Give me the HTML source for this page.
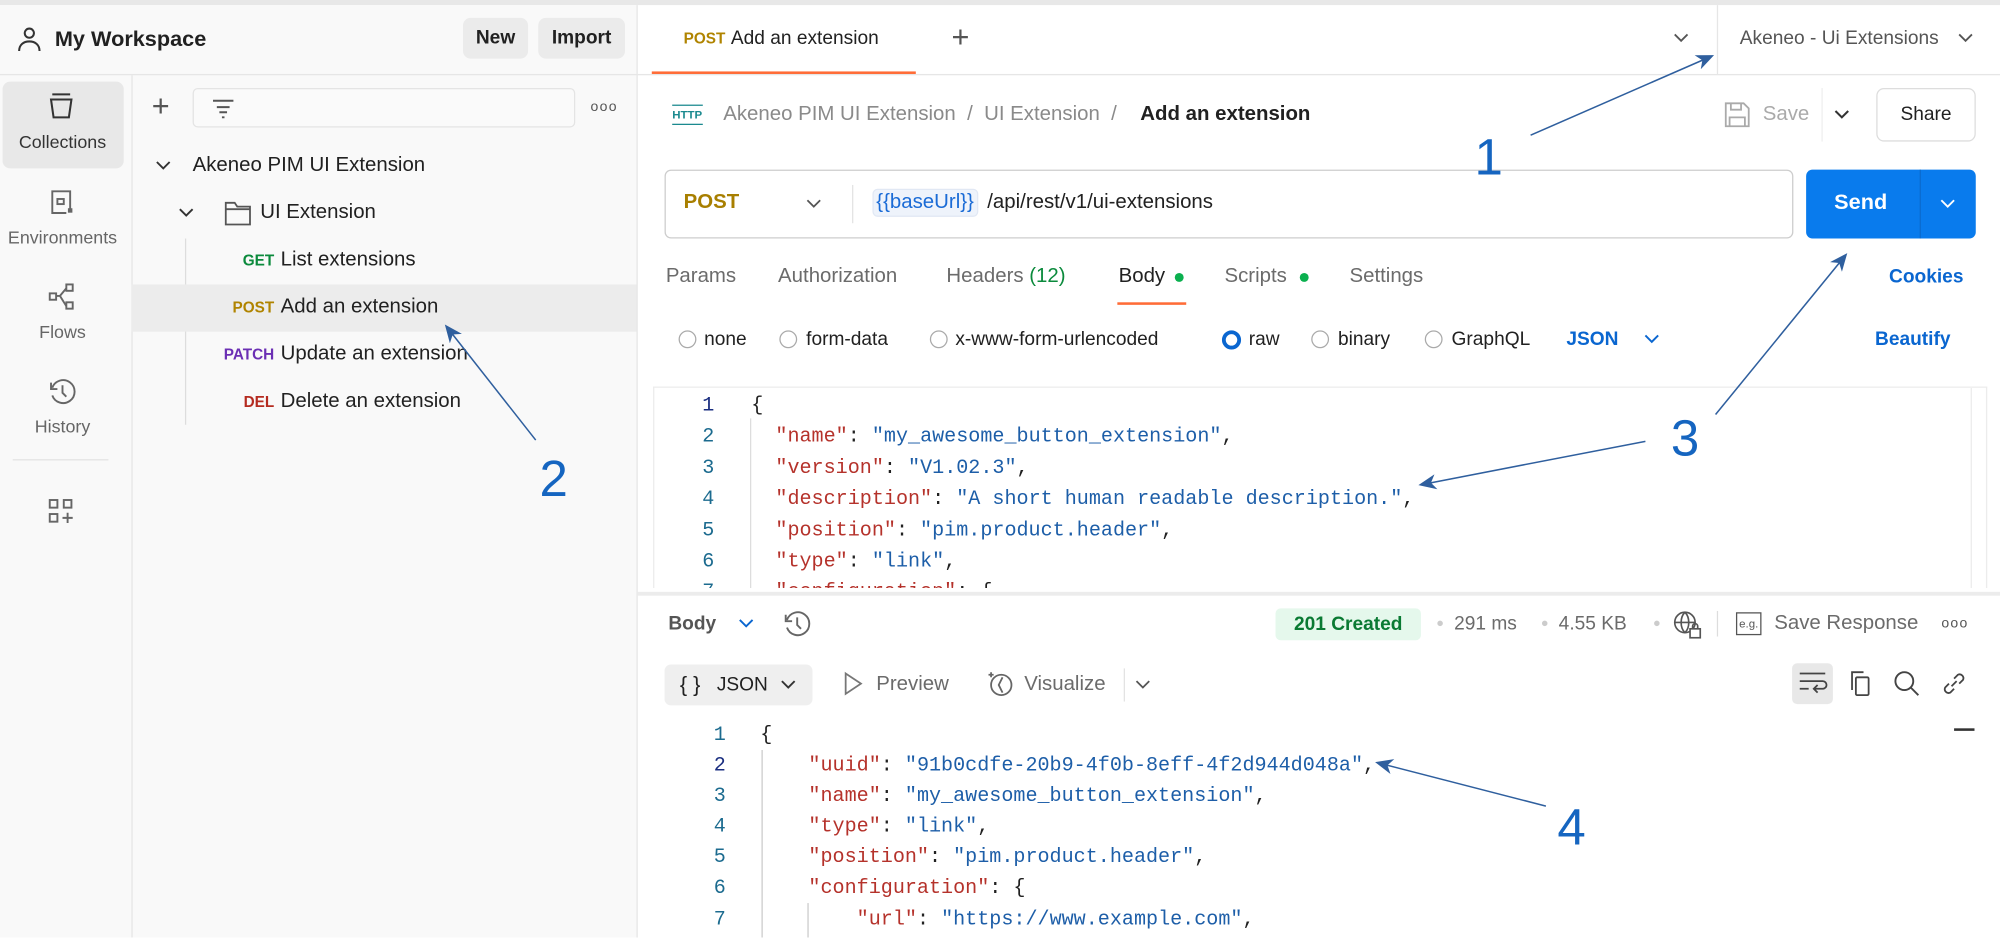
<!DOCTYPE html>
<html><head><meta charset="utf-8"><style>
*{box-sizing:border-box;margin:0;padding:0}
html,body{width:2000px;height:937px;overflow:hidden;background:#fff}
#w{position:absolute;left:0;top:0;width:1568px;height:735px;transform:scale(1.27551);transform-origin:0 0;font-family:"Liberation Sans",sans-serif;color:#212121;font-size:16px}
.a{position:absolute;white-space:nowrap}
.c{transform:translateY(-50%)}
.mono{font-family:"Liberation Mono",monospace;font-size:15.75px}
.k{color:#b5322b}.s{color:#1d5ea8}
.g{color:#6b6b6b}
svg{position:absolute;overflow:visible}
</style></head><body><div id="w">
<div class="a" style="left:0;top:0;width:1568px;height:4px;background:#e8e8e8"></div>
<!-- sidebar -->
<div class="a" style="left:0;top:4px;width:500px;height:731px;background:#f9f9f9;border-right:1px solid #e6e6e6"></div>
<div class="a" style="left:0;top:58px;width:500px;height:1px;background:#e6e6e6"></div>
<div class="a" style="left:103px;top:59px;width:1px;height:676px;background:#e6e6e6"></div>
<svg style="left:12px;top:20px" width="22" height="22" viewBox="0 0 22 22" fill="none" stroke="#333" stroke-width="1.6"><circle cx="11" cy="6" r="3.6"/><path d="M3 20c0-5 3.5-7.5 8-7.5s8 2.5 8 7.5"/></svg>
<div class="a c" style="left:43px;top:31px;font-weight:bold;font-size:17px">My Workspace</div>
<div class="a" style="left:363px;top:14px;width:51px;height:32px;background:#ebebeb;border-radius:6px;font-weight:bold;font-size:15px;line-height:32px;text-align:center">New</div>
<div class="a" style="left:422px;top:14px;width:68px;height:32px;background:#ebebeb;border-radius:6px;font-weight:bold;font-size:15px;line-height:32px;text-align:center">Import</div>
<div class="a" style="left:2px;top:64px;width:95px;height:68px;background:#e8e8e8;border-radius:6px"></div>
<svg style="left:38px;top:72px" width="20" height="22" viewBox="0 0 20 22" fill="none" stroke="#333" stroke-width="1.6"><path d="M3 2h14M2 6h16l-2 14H4z"/></svg>
<div class="a c" style="left:0;width:98px;text-align:center;top:111px;font-size:14px;color:#333">Collections</div>
<svg style="left:39px;top:148px" width="20" height="22" viewBox="0 0 20 22" fill="none" stroke="#666" stroke-width="1.5"><path d="M16 16V2H2v17h11"/><rect x="6" y="8" width="5" height="4"/><rect x="15" y="16" width="2" height="2" fill="#666"/></svg>
<div class="a c" style="left:0;width:98px;text-align:center;top:186px;font-size:14px;color:#666">Environments</div>
<svg style="left:38px;top:222px" width="22" height="22" viewBox="0 0 22 22" fill="none" stroke="#666" stroke-width="1.5"><rect x="1" y="8" width="5" height="5"/><rect x="14" y="1" width="5" height="5"/><rect x="14" y="15" width="5" height="5"/><path d="M6 10h3l5-6M9 10l5 8"/></svg>
<div class="a c" style="left:0;width:98px;text-align:center;top:260px;font-size:14px;color:#666">Flows</div>
<svg style="left:38px;top:296px" width="22" height="22" viewBox="0 0 22 22" fill="none" stroke="#666" stroke-width="1.5"><path d="M3 8a9 9 0 1 1 0 6M2 4v5h5M11 6v6l3 3"/></svg>
<div class="a c" style="left:0;width:98px;text-align:center;top:334px;font-size:14px;color:#666">History</div>
<div class="a" style="left:10px;top:360px;width:75px;height:1px;background:#e3e3e3"></div>
<svg style="left:38px;top:391px" width="20" height="20" viewBox="0 0 20 20" fill="none" stroke="#666" stroke-width="1.5"><rect x="1" y="1" width="6" height="6"/><rect x="12" y="1" width="6" height="6"/><rect x="1" y="12" width="6" height="6"/><path d="M15 11v8M11 15h8"/></svg>
<!-- tree -->
<div class="a c" style="left:119px;top:84px;font-size:24px;color:#555;font-weight:300">+</div>
<div class="a" style="left:151px;top:69px;width:300px;height:31px;border:1px solid #e4e4e4;border-radius:4px;background:#fafafa"></div>
<svg style="left:165px;top:76px" width="20" height="18" viewBox="0 0 20 18" stroke="#555" stroke-width="1.5"><path d="M2 3h16M5 8h10M7 12h6M9 16h2"/></svg>
<div class="a c" style="left:463px;top:84px;font-size:11px;color:#555;letter-spacing:1px">ooo</div>
<svg style="left:122px;top:124px" width="12" height="12" viewBox="0 0 12 12" fill="none" stroke="#333" stroke-width="1.5"><path d="M1 3l5 5 5-5"/></svg>
<div class="a c" style="left:151px;top:130px">Akeneo PIM UI Extension</div>
<svg style="left:140px;top:161px" width="12" height="12" viewBox="0 0 12 12" fill="none" stroke="#333" stroke-width="1.5"><path d="M1 3l5 5 5-5"/></svg>
<svg style="left:176px;top:156px" width="22" height="22" viewBox="0 0 22 22" fill="none" stroke="#555" stroke-width="1.4"><path d="M1 3h7l2 3h10v14H1zM1 8h19"/></svg>
<div class="a c" style="left:204px;top:167px">UI Extension</div>
<div class="a" style="left:145px;top:187px;width:1px;height:146px;background:#ddd"></div>
<div class="a" style="left:103px;top:223px;width:396px;height:37px;background:#ececec"></div>
<div class="a c" style="right:1353px;top:204px;font-size:12px;font-weight:bold;color:#0b8a3c">GET</div>
<div class="a c" style="left:220px;top:204px">List extensions</div>
<div class="a c" style="right:1353px;top:241px;font-size:12px;font-weight:bold;color:#b08400">POST</div>
<div class="a c" style="left:220px;top:241px">Add an extension</div>
<div class="a c" style="right:1353px;top:278px;font-size:12px;font-weight:bold;color:#6b2fb4">PATCH</div>
<div class="a c" style="left:220px;top:278px">Update an extension</div>
<div class="a c" style="right:1353px;top:315px;font-size:12px;font-weight:bold;color:#b52b20">DEL</div>
<div class="a c" style="left:220px;top:315px">Delete an extension</div>
<!-- tab bar -->
<div class="a" style="left:500px;top:58px;width:1068px;height:1px;background:#e6e6e6"></div>
<div class="a c" style="left:536px;top:30px;font-size:12px;font-weight:bold;color:#b08400">POST</div>
<div class="a c" style="left:573px;top:30px;font-size:15px">Add an extension</div>
<div class="a" style="left:511px;top:56px;width:207px;height:2px;background:#ff6c37"></div>
<div class="a c" style="left:746px;top:30px;font-size:24px;color:#555;font-weight:300">+</div>
<svg style="left:1312px;top:25px" width="12" height="10" viewBox="0 0 12 10" fill="none" stroke="#555" stroke-width="1.4"><path d="M1 2l5 5 5-5"/></svg>
<div class="a" style="left:1346px;top:4px;width:1px;height:54px;background:#e6e6e6"></div>
<div class="a c" style="left:1364px;top:30px;font-size:15px;color:#555">Akeneo - Ui Extensions</div>
<svg style="left:1535px;top:25px" width="12" height="10" viewBox="0 0 12 10" fill="none" stroke="#555" stroke-width="1.4"><path d="M1 2l5 5 5-5"/></svg>
<!-- breadcrumb -->
<div class="a c" style="left:527px;top:90px;font-size:9px;font-weight:bold;color:#1b8a8f;border-top:1.5px solid #1b8a8f;border-bottom:1.5px solid #1b8a8f;padding:2px 0">HTTP</div>
<div class="a c g" style="left:567px;top:90px;color:#8a8a8a">Akeneo PIM UI Extension &nbsp;/ &nbsp;UI Extension &nbsp;/&nbsp;</div>
<div class="a c" style="left:894px;top:90px;font-weight:bold;color:#212121">Add an extension</div>
<svg style="left:1352px;top:80px" width="20" height="20" viewBox="0 0 20 20" fill="none" stroke="#aaa" stroke-width="1.4"><path d="M1 1h14l4 4v14H1zM5 1v5h8V1M4 19v-7h12v7"/></svg>
<div class="a c" style="left:1382px;top:90px;color:#aaa">Save</div>
<div class="a" style="left:1428px;top:69px;width:1px;height:42px;background:#eee"></div>
<svg style="left:1438px;top:85px" width="12" height="10" viewBox="0 0 12 10" fill="none" stroke="#333" stroke-width="1.6"><path d="M1 2l5 5 5-5"/></svg>
<div class="a" style="left:1471px;top:69px;width:78px;height:42px;border:1px solid #ddd;border-radius:6px;line-height:40px;text-align:center;font-size:15px">Share</div>
<!-- url -->
<div class="a" style="left:521px;top:133px;width:885px;height:54px;border:1px solid #cdcdcd;border-radius:5px"></div>
<div class="a c" style="left:536px;top:159px;font-weight:bold;color:#a87f00">POST</div>
<svg style="left:632px;top:155px" width="12" height="10" viewBox="0 0 12 10" fill="none" stroke="#555" stroke-width="1.4"><path d="M1 2l5 5 5-5"/></svg>
<div class="a" style="left:668px;top:145px;width:1px;height:30px;background:#e3e3e3"></div>
<div class="a c" style="left:684px;top:159px;background:#eef3fb;border:1px solid #e1e8f4;border-radius:4px;color:#1a6bd6;padding:1px 2px">{{baseUrl}}</div>
<div class="a c" style="left:774px;top:159px">/api/rest/v1/ui-extensions</div>
<div class="a" style="left:1416px;top:133px;width:133px;height:54px;background:#097bed;border-radius:5px"></div>
<div class="a" style="left:1505px;top:133px;width:1px;height:54px;background:#0a6bcf"></div>
<div class="a c" style="left:1438px;top:159px;color:#fff;font-weight:bold;font-size:17px">Send</div>
<svg style="left:1521px;top:155px" width="12" height="10" viewBox="0 0 12 10" fill="none" stroke="#fff" stroke-width="1.5"><path d="M1 2l5 5 5-5"/></svg>
<!-- tabs -->
<div class="a c" style="left:522px;top:217px;color:#6b6b6b">Params</div>
<div class="a c" style="left:610px;top:217px;color:#6b6b6b">Authorization</div>
<div class="a c" style="left:742px;top:217px;color:#6b6b6b">Headers <span style="color:#0b8a3c">(12)</span></div>
<div class="a c" style="left:877px;top:217px">Body</div>
<div class="a" style="left:921px;top:214px;width:7px;height:7px;border-radius:50%;background:#0bb04f"></div>
<div class="a" style="left:876px;top:237px;width:54px;height:2px;background:#ff6c37"></div>
<div class="a c" style="left:960px;top:217px;color:#6b6b6b">Scripts</div>
<div class="a" style="left:1019px;top:214px;width:7px;height:7px;border-radius:50%;background:#0bb04f"></div>
<div class="a c" style="left:1058px;top:217px;color:#6b6b6b">Settings</div>
<div class="a c" style="left:1481px;top:217px;color:#0a66d0;font-weight:bold;font-size:15px">Cookies</div>
<!-- radios -->
<div class="a" style="left:532px;top:259px;width:14px;height:14px;border:1px solid #aaa;border-radius:50%"></div>
<div class="a c" style="left:552px;top:266px;font-size:15px">none</div>
<div class="a" style="left:611px;top:259px;width:14px;height:14px;border:1px solid #aaa;border-radius:50%"></div>
<div class="a c" style="left:632px;top:266px;font-size:15px">form-data</div>
<div class="a" style="left:729px;top:259px;width:14px;height:14px;border:1px solid #aaa;border-radius:50%"></div>
<div class="a c" style="left:749px;top:266px;font-size:15px">x-www-form-urlencoded</div>
<div class="a" style="left:958px;top:259px;width:15px;height:15px;border:3.5px solid #0a66d0;border-radius:50%"></div>
<div class="a c" style="left:979px;top:266px;font-size:15px">raw</div>
<div class="a" style="left:1028px;top:259px;width:14px;height:14px;border:1px solid #aaa;border-radius:50%"></div>
<div class="a c" style="left:1049px;top:266px;font-size:15px">binary</div>
<div class="a" style="left:1117px;top:259px;width:14px;height:14px;border:1px solid #aaa;border-radius:50%"></div>
<div class="a c" style="left:1138px;top:266px;font-size:15px">GraphQL</div>
<div class="a c" style="left:1228px;top:266px;font-size:15px;font-weight:bold;color:#0a66d0">JSON</div>
<svg style="left:1289px;top:261px" width="12" height="10" viewBox="0 0 12 10" fill="none" stroke="#0a66d0" stroke-width="1.5"><path d="M1 2l5 5 5-5"/></svg>
<div class="a c" style="left:1470px;top:266px;font-size:15px;font-weight:bold;color:#0a66d0">Beautify</div>
<!-- editor -->
<div class="a" style="left:512px;top:303px;width:1046px;height:158px;border:1px solid #ececec;border-bottom:none;overflow:hidden">
 <div class="a" style="left:1032px;top:0;width:1px;height:158px;background:#ececec"></div>
 <div class="a" style="left:75px;top:24px;width:1px;height:140px;background:#ddd"></div>
 <div class="mono" style="position:absolute;left:0;top:2px;line-height:24.4px">
  <div style="position:absolute;left:0;width:47px;text-align:right;color:#1c6b8f"><div style="color:#1a2e80">1</div><div>2</div><div>3</div><div>4</div><div>5</div><div>6</div><div>7</div></div>
  <div style="position:absolute;left:76px;white-space:pre">{
  <span class="k">"name"</span>: <span class="s">"my_awesome_button_extension"</span>,
  <span class="k">"version"</span>: <span class="s">"V1.02.3"</span>,
  <span class="k">"description"</span>: <span class="s">"A short human readable description."</span>,
  <span class="k">"position"</span>: <span class="s">"pim.product.header"</span>,
  <span class="k">"type"</span>: <span class="s">"link"</span>,
  <span class="k">"configuration"</span>: {</div>
 </div>
</div>
<div class="a" style="left:500px;top:464px;width:1068px;height:3px;background:#ececec"></div>
<!-- response bar -->
<div class="a c" style="left:524px;top:489px;font-size:15px;font-weight:bold;color:#555">Body</div>
<svg style="left:579px;top:484px" width="12" height="10" viewBox="0 0 12 10" fill="none" stroke="#0a66d0" stroke-width="1.5"><path d="M1 2l5 5 5-5"/></svg>
<svg style="left:614px;top:478px" width="22" height="22" viewBox="0 0 22 22" fill="none" stroke="#666" stroke-width="1.5"><path d="M3 8a9 9 0 1 1 0 6M2 4v5h5M11 6v6l3 3"/></svg>
<div class="a" style="left:1000px;top:477px;width:114px;height:25px;background:#e5f8ec;border-radius:4px;text-align:center;line-height:25px;color:#0a7a33;font-weight:bold;font-size:15px">201 Created</div>
<div class="a c" style="left:1126px;top:489px;color:#ccc;font-size:10px">●</div>
<div class="a c" style="left:1140px;top:489px;color:#6b6b6b;font-size:15px">291 ms</div>
<div class="a c" style="left:1208px;top:489px;color:#ccc;font-size:10px">●</div>
<div class="a c" style="left:1222px;top:489px;color:#6b6b6b;font-size:15px">4.55 KB</div>
<div class="a c" style="left:1296px;top:489px;color:#ccc;font-size:10px">●</div>
<svg style="left:1312px;top:479px" width="22" height="22" viewBox="0 0 22 22" fill="none" stroke="#555" stroke-width="1.3"><circle cx="9" cy="9" r="8"/><path d="M1 9h16M9 1c-4 4-4 12 0 16M9 1c4 4 4 12 0 16"/><rect x="13" y="14" width="8" height="7" fill="#fff"/><path d="M15 14v-2a2 2 0 0 1 4 0v2"/></svg>
<div class="a" style="left:1346px;top:479px;width:1px;height:20px;background:#ddd"></div>
<div class="a" style="left:1361px;top:480px;width:20px;height:18px;border:1.3px solid #555;font-size:9px;line-height:16px;text-align:center;color:#555">e.g.</div>
<div class="a c" style="left:1391px;top:489px;color:#6b6b6b;font-size:16px">Save Response</div>
<div class="a c" style="left:1522px;top:489px;font-size:11px;color:#555;letter-spacing:1px">ooo</div>
<div class="a" style="left:521px;top:521px;width:116px;height:32px;background:#efefef;border-radius:5px"></div>
<div class="a c" style="left:533px;top:537px;font-size:17px">{ }</div>
<div class="a c" style="left:562px;top:537px;font-size:15px">JSON</div>
<svg style="left:612px;top:532px" width="12" height="10" viewBox="0 0 12 10" fill="none" stroke="#333" stroke-width="1.5"><path d="M1 2l5 5 5-5"/></svg>
<svg style="left:661px;top:527px" width="16" height="18" viewBox="0 0 16 18" fill="none" stroke="#777" stroke-width="1.4"><path d="M2 1l12 8-12 8z"/></svg>
<div class="a c" style="left:687px;top:537px;font-size:16px;color:#6b6b6b">Preview</div>
<svg style="left:773px;top:525px" width="22" height="22" viewBox="0 0 22 22" fill="none" stroke="#666" stroke-width="1.4"><circle cx="12" cy="12" r="8"/><path d="M13 6l-3 6 3 6M4 2v4M2 4h4"/></svg>
<div class="a c" style="left:803px;top:537px;font-size:16px;color:#6b6b6b">Visualize</div>
<div class="a" style="left:881px;top:524px;width:1px;height:26px;background:#e3e3e3"></div>
<svg style="left:890px;top:532px" width="12" height="10" viewBox="0 0 12 10" fill="none" stroke="#555" stroke-width="1.4"><path d="M1 2l5 5 5-5"/></svg>
<div class="a" style="left:1405px;top:520px;width:32px;height:32px;background:#e8e8e8;border-radius:4px"></div>
<svg style="left:1410px;top:526px" width="22" height="20" viewBox="0 0 22 20" fill="none" stroke="#444" stroke-width="1.4"><path d="M1 2h20M1 8h18a3 3 0 0 1 0 6h-6M15 11l-3 3 3 3M1 14h7"/></svg>
<svg style="left:1448px;top:525px" width="20" height="22" viewBox="0 0 20 22" fill="none" stroke="#444" stroke-width="1.4"><path d="M4 16V2h9"/><rect x="7" y="6" width="10" height="14" rx="1"/></svg>
<svg style="left:1484px;top:525px" width="22" height="22" viewBox="0 0 22 22" fill="none" stroke="#444" stroke-width="1.5"><circle cx="9" cy="9" r="7"/><path d="M14 14l6 6"/></svg>
<svg style="left:1521px;top:525px" width="22" height="22" viewBox="0 0 22 22" fill="none" stroke="#444" stroke-width="1.4"><path d="M9 13l4-4M7 11l-3 3a3 3 0 0 0 4 4l3-3M15 11l3-3a3 3 0 0 0-4-4l-3 3"/></svg>
<!-- response code -->
<div class="a" style="left:1532px;top:571px;width:16px;height:2px;background:#333"></div>
<div class="a" style="left:597px;top:588px;width:1px;height:147px;background:#ccc"></div>
<div class="a" style="left:633px;top:708px;width:1px;height:27px;background:#ccc"></div>
<div class="mono" style="position:absolute;left:520px;top:564px;line-height:24.1px">
 <div style="position:absolute;left:0;width:49px;text-align:right;color:#1c6b8f"><div>1</div><div style="color:#1a2e80">2</div><div>3</div><div>4</div><div>5</div><div>6</div><div>7</div></div>
 <div style="position:absolute;left:76px;white-space:pre">{
    <span class="k">"uuid"</span>: <span class="s">"91b0cdfe-20b9-4f0b-8eff-4f2d944d048a"</span>,
    <span class="k">"name"</span>: <span class="s">"my_awesome_button_extension"</span>,
    <span class="k">"type"</span>: <span class="s">"link"</span>,
    <span class="k">"position"</span>: <span class="s">"pim.product.header"</span>,
    <span class="k">"configuration"</span>: {
        <span class="k">"url"</span>: <span class="s">"https://www.example.com"</span>,</div>
</div>
<!-- annotations -->
<svg style="left:0;top:0" width="1568" height="735" viewBox="0 0 1568 735">
<defs><marker id="m" markerWidth="14" markerHeight="12" refX="12" refY="6" orient="auto" markerUnits="userSpaceOnUse"><path d="M0 0L14 6 0 12 4 6z" fill="#2f5f9e"/></marker></defs>
<g stroke="#2f5f9e" stroke-width="1.2" fill="none" marker-end="url(#m)">
<path d="M1200 106L1342 44"/><path d="M420 345L350 256"/><path d="M1345 325L1447 200"/><path d="M1290 346L1114 380"/><path d="M1212 632L1080 598"/></g>
<g fill="#1565c0" font-family="Liberation Sans,sans-serif" font-size="40"><text x="1156" y="137">1</text><text x="423" y="389">2</text><text x="1310" y="357">3</text><text x="1221" y="662">4</text></g>
</svg>
</div></body></html>
